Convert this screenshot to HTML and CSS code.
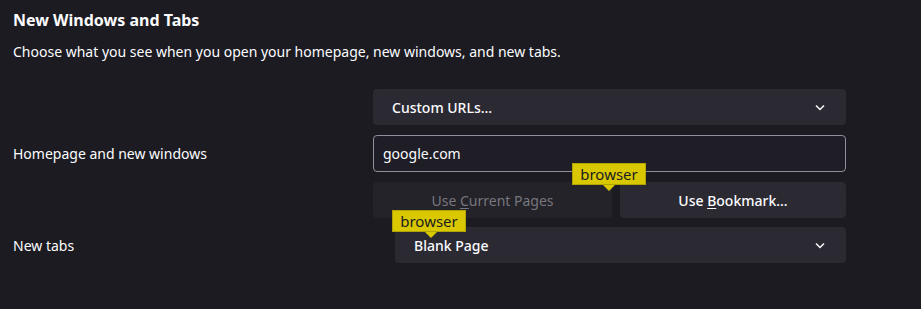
FILE: index.html
```html
<!DOCTYPE html>
<html lang="en">
<head>
  <meta charset="UTF-8" />
  <title>New Windows and Tabs</title>
  <link rel="stylesheet" href="styles.css">
</head>
<body>
  <section class="pane">
    <h1>New Windows and Tabs</h1>
    <p class="desc">Choose what you see when you open your homepage, new windows, and new tabs.</p>

    <div class="rows">
      <div></div>
      <div class="select">
        <span>Custom URLs...</span>
        <svg class="chev" width="10" height="7" viewBox="0 0 10 7"><path d="M1 1.5 5 5.5l4-4" fill="none" stroke="#fbfbfe" stroke-width="1.5"/></svg>
      </div>

      <label class="label">Homepage and new windows</label>
      <div class="input">google.com</div>

      <div></div>
      <div class="btns">
        <button class="btn disabled">Use <u>C</u>urrent Pages
          <span class="tip tip-a">browser</span>
        </button>
        <button class="btn">Use <u>B</u>ookmark...</button>
      </div>

      <label class="label">New tabs</label>
      <div class="select indent">
        <span>Blank Page</span>
        <svg class="chev" width="10" height="7" viewBox="0 0 10 7"><path d="M1 1.5 5 5.5l4-4" fill="none" stroke="#fbfbfe" stroke-width="1.5"/></svg>
        <span class="tip tip-b">browser</span>
      </div>
    </div>
  </section>
</body>
</html>
```

FILE: styles.css
```css
body {
  margin: 0;
  background-color: #1c1b22;
  color: #fbfbfe;
  font-family: "Noto Sans", "Open Sans", sans-serif;
}
.pane {
  padding: 9px 13px 0;
}
h1 {
  font-size: 16px;
  font-weight: 700;
  margin: 0 0 10px;
  line-height: 22px;
}
.desc {
  font-size: 14px;
  margin: 0 0 27px;
  line-height: 21px;
}
.rows {
  display: grid;
  grid-template-columns: 360px 473px;
  row-gap: 10px;
  align-items: center;
}
.label {
  font-size: 14px;
}
.select {
  position: relative;
  height: 36px;
  background-color: #2b2a33;
  border-radius: 4px;
  display: flex;
  align-items: center;
  justify-content: space-between;
  padding: 0 21px 0 19px;
  font-size: 14px;
  font-weight: 500;
}
.select.indent {
  margin-left: 22px;
  margin-top: -1px;
}
.chev {
  display: block;
}
.input {
  height: 35px;
  border: 1px solid #8f8f9d;
  border-radius: 4px;
  background-color: #1f1e26;
  display: flex;
  align-items: center;
  padding: 0 9px;
  font-size: 14px;
}
.btns {
  display: grid;
  grid-template-columns: 239px 1fr;
  gap: 8px;
}
.btn {
  position: relative;
  height: 36px;
  border: none;
  border-radius: 4px;
  background-color: #2b2a33;
  color: #fbfbfe;
  font-family: inherit;
  font-size: 14px;
  font-weight: 500;
}
.btn.disabled {
  background-color: #24232a;
  color: #77767d;
  font-weight: 400;
}
.btn u {
  text-underline-offset: 2px;
}
.tip {
  position: absolute;
  z-index: 2;
  background-color: #d9c800;
  border: 1px solid #b2a400;
  color: #1c1b22;
  font-size: 15px;
  font-weight: 400;
  line-height: 20px;
  width: 74px;
  text-align: center;
  box-sizing: border-box;
}
.tip::after {
  content: "";
  position: absolute;
  left: 50%;
  bottom: -7px;
  margin-left: -6px;
  border-left: 6px solid transparent;
  border-right: 6px solid transparent;
  border-top: 6px solid #d9c800;
}
.tip-a {
  left: 199px;
  top: -19px;
}
.tip-b {
  left: -3px;
  top: -17px;
}
.tip-b::after {
  left: 38px;
}
```
